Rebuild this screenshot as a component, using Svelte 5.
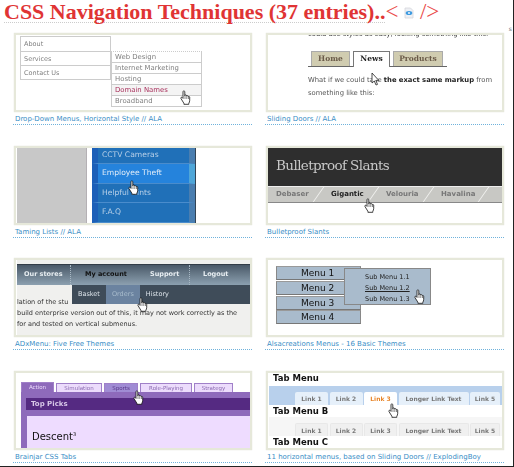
<script>
  const menu1 = ['About', 'Services', 'Contact Us'];
  const sub1 = ['Web Design', 'Internet Marketing', 'Hosting', 'Domain Names', 'Broadband'];
  const doors = [['Home', 39], ['News', 37], ['Products', 50]];
  const blue = ['CCTV Cameras', 'Employee Theft', 'Helpful Hints', 'F.A.Q'];
  const slants = ['Debaser', 'Gigantic', 'Velouria', 'Havalina'];
  const adx = [['Our stores', 47, 14], ['My account', 65, 0], ['Support', 40, 13], ['Logout', 35, 0]];
  const links = [['Link 1', 33], ['Link 2', 33], ['Link 3', 33], ['Longer Link Text', 70], ['Link 5', 30]];
  const purple = [['Action', 33], ['Simulation', 46], ['Sports', 34], ['Role-Playing', 52], ['Strategy', 39]];
</script>

{#snippet hand(x, y)}
  <svg class="hand" style="left:{x}px;top:{y}px" width="11" height="15" viewBox="0 0 11 15">
    <path d="M3.2 1.2c.7-.6 1.6-.2 1.6.7v4l.2-.6c.4-.6 1.3-.5 1.5.2l.1.5c.4-.6 1.3-.5 1.5.2l.1.4c.5-.4 1.4-.2 1.5.6v3.2c0 1.2-.4 2-.9 2.9v1H3.9v-1L1 8.600c-.6-.9.4-1.800 1.200-1.100l.8.9V1.900c0-.3 0-.5.200-.7z" fill="#fff" stroke="#111" stroke-width=".8"/>
    <path d="M5 6v3M6.800 6.300V9M8.500 6.800V9" stroke="#111" stroke-width=".5" fill="none"/>
  </svg>
{/snippet}

<div class="page">
  <header>
    <h1><span class="name">CSS Navigation Techniques (37 entries)..</span><span class="tag">&lt;
      <svg class="doc" width="10" height="12" viewBox="0 0 10 12">
        <path d="M1 1h5.500L9 3.500V11H1z" fill="#eef0f4" stroke="#d4d6dc" stroke-width=".8"/>
        <ellipse cx="5" cy="6" rx="3.300" ry="2" fill="#3f9be0"/>
        <circle cx="5" cy="6" r=".9" fill="#fff"/>
      </svg>
      /&gt;</span></h1>
    <span class="stray">s</span>
  </header>

  <div class="grid">
    <section>
      <div class="card"><div class="thumb t1">
        <ul class="left">{#each menu1 as m}<li>{m}</li>{/each}</ul>
        <ul class="sub">{#each sub1 as s, i}<li class:on={i === 3}>{s}</li>{/each}</ul>
        {@render hand(164, 55)}
      </div></div>
      <a href="#a">Drop-Down Menus, Horizontal Style // ALA</a>
    </section>

    <section>
      <div class="card"><div class="thumb t2">
        <p class="cut">could use styles as easy, looking something like this:</p>
        <div class="tabs">
          {#each doors as d, i}<span class:on={i === 1} style="width:{d[1]}px">{d[0]}</span>{/each}
        </div>
        <p class="para">What if we could take <b>the exact same markup</b> from something like this:</p>
        <svg class="hand" style="left:103px;top:37px" width="9" height="14" viewBox="0 0 9 14">
          <path d="M1 1v10l2.300-2 1.700 4 1.500-.6-1.700-4h3z" fill="#fff" stroke="#222" stroke-width=".8"/>
        </svg>
      </div></div>
      <a href="#a">Sliding Doors // ALA</a>
    </section>

    <section>
      <div class="card"><div class="thumb t3">
        <div class="grey"></div>
        <div class="blue">
          {#each blue as b, i}<div class="row" class:on={i === 1}>{b}</div>{/each}
        </div>
        {@render hand(112, 32)}
      </div></div>
      <a href="#a">Taming Lists // ALA</a>
    </section>

    <section>
      <div class="card"><div class="thumb t4">
        <div class="dark">Bulletproof Slants</div>
        <nav>
          {#each slants as s, i}<span class:on={i === 1}>{s}</span>{/each}
        </nav>
        {@render hand(96, 50)}
      </div></div>
      <a href="#a">Bulletproof Slants</a>
    </section>

    <section>
      <div class="card"><div class="thumb t5">
        <nav>
          {#each adx as a, i}<span class:on={i === 1} class:sep={a[2] > 0} style="width:{a[1]}px;margin-right:{a[2]}px">{a[0]}</span>{/each}
        </nav>
        <div class="copy">
          <p>lation of the stu</p>
          <p>build enterprise version out of this, it may not work correctly as the</p>
          <p>for and tested on vertical submenus.</p>
        </div>
        <div class="bar">
          <span>Basket</span><span class="on">Orders</span><span>History</span>
        </div>
        {@render hand(120, 37)}
      </div></div>
      <a href="#a">ADxMenu: Five Free Themes</a>
    </section>

    <section>
      <div class="card"><div class="thumb t6">
        <div class="main">
          {#each [1, 2, 3, 4] as n}<div>Menu {n}</div>{/each}
        </div>
        <div class="pop">
          <span>Sub Menu 1.1</span>
          <span class="on">Sub Menu 1.2</span>
          <span>Sub Menu 1.3</span>
        </div>
        {@render hand(146, 29)}
      </div></div>
      <a href="#a">Alsacreations Menus - 16 Basic Themes</a>
    </section>

    <section>
      <div class="card"><div class="thumb t7">
        <div class="ptabs">
          {#each purple as p, i}<span class:active={i === 0} class:over={i === 2} style="width:{p[1]}px">{p[0]}</span>{/each}
        </div>
        <div class="panel">
          <div class="picks">Top Picks</div>
          <div class="body">Descent<sup>3</sup></div>
        </div>
        {@render hand(117, 17)}
      </div></div>
      <a href="#a">Brainjar CSS Tabs</a>
    </section>

    <section>
      <div class="card"><div class="thumb t8">
        <h2>Tab Menu</h2>
        <div class="band a">
          {#each links as l, i}<span class:on={i === 2} style="width:{l[1]}px">{l[0]}</span>{/each}
        </div>
        <h2>Tab Menu B</h2>
        <div class="band b">
          {#each links as l}<span style="width:{l[1]}px">{l[0]}</span>{/each}
        </div>
        <h2>Tab Menu C</h2>
        {@render hand(120, 30)}
      </div></div>
      <a href="#a">11 horizontal menus, based on Sliding Doors // ExplodingBoy</a>
    </section>
  </div>
</div>

<style>
  :global(body) {
    background: #fff;
  }

  .page {
    box-sizing: border-box;
    width: 514px;
    height: 467px;
    overflow: hidden;
    border-right: 1px solid #222;
    border-bottom: 1px solid #222;
    font-family: "DejaVu Sans", sans-serif;
  }

  header {
    display: flex;
    height: 33px;
    padding-left: 4px;
    box-sizing: border-box;
  }

  h1 {
    margin: 0;
    height: 23px;
    font: bold 22px/24px "Liberation Serif", serif;
    color: #e03434;
    white-space: nowrap;
  }

  .name {
    display: inline-block;
    border-bottom: 1px dotted #ccc;
    height: 22px;
  }

  .tag {
    font-weight: normal;
    font-size: 23px;
    color: #ea4a4a;
  }

  .doc {
    vertical-align: 0;
  }

  .stray {
    margin-left: auto;
    margin-right: 1px;
    align-self: flex-end;
    font-size: 6px;
    line-height: 8px;
    color: #666;
  }

  .grid {
    display: grid;
    grid-template-columns: 239px 239px;
    column-gap: 13px;
    row-gap: 19.67px;
    margin-left: 13px;
  }

  section {
    height: 93px;
  }

  .card {
    box-sizing: border-box;
    width: 238px;
    height: 79px;
    margin-left: 1px;
    border: 2px solid #e6e8da;
    box-shadow: 0 0 1px #d8dad0;
  }

  .thumb {
    position: relative;
    box-sizing: border-box;
    height: 75px;
    overflow: hidden;
    background: #fff;
    filter: blur(.3px);
  }

  section > a {
    display: block;
    height: 13px;
    padding: 3px 0 0 2px;
    box-sizing: border-box;
    border-bottom: 1px dotted #6fb2dc;
    font-size: 7px;
    line-height: 9px;
    color: #3a8ec6;
    text-decoration: none;
    white-space: nowrap;
    overflow: hidden;
  }

  .hand {
    position: absolute;
  }

  ul {
    list-style: none;
    margin: 0;
    padding: 0;
  }

  /* drop-down */
  .t1 {
    display: flex;
    align-items: flex-start;
    padding: 1px 0 0 4px;
    font-size: 6.5px;
    color: #808080;
  }

  .left {
    width: 91px;
    box-sizing: border-box;
    border-left: 1px solid #ccc;
  }

  .left li {
    box-sizing: border-box;
    height: 14.7px;
    line-height: 14px;
    padding-left: 3px;
    border-top: 1px solid #ccc;
    border-right: 1px solid #ccc;
  }

  .left li:last-child {
    border-bottom: 1px solid #ccc;
  }

  .sub {
    width: 91px;
    margin-top: 14.5px;
    font-size: 6.9px;
  }

  .sub li {
    box-sizing: border-box;
    height: 11px;
    line-height: 10px;
    padding-left: 3px;
    border: 1px solid #ccc;
    border-width: 1px 1px 0 1px;
  }

  .sub li:first-child {
    border-top-style: dotted;
  }

  .sub li:last-child {
    height: 12px;
    border-bottom-width: 1px;
  }

  .sub li.on {
    background: #f4f4f4;
    color: #a8305c;
  }

  /* sliding doors */
  .t2 {
    padding-left: 40px;
    font-size: 6.8px;
    color: #555;
  }

  .cut {
    margin: -5px 0 0;
    height: 8px;
    line-height: 8px;
    white-space: nowrap;
    color: #333;
  }

  .tabs {
    display: flex;
    gap: 3px;
    width: 139px;
    height: 16px;
    margin-top: 13px;
    padding-left: 3px;
    box-sizing: border-box;
    border-bottom: 1px solid #666;
    font: bold 7.5px/14px "DejaVu Serif", serif;
  }

  .tabs span {
    box-sizing: border-box;
    text-align: center;
    background: #d0ccb0;
    border: 1px solid #aaa;
    border-bottom: 0;
    color: #6a5a48;
  }

  .tabs .on {
    height: 16px;
    background: #fff;
    border-color: #777;
    color: #222;
  }

  .para {
    margin: 7px 0 0;
    width: 194px;
    line-height: 12.500px;
  }

  .para b {
    color: #222;
  }

  /* taming lists */
  .t3 {
    display: flex;
  }

  .grey {
    width: 69px;
    margin-left: 1px;
    background: #c8c8c8;
    border-right: 1px solid #b4b0b4;
  }

  .blue {
    width: 103px;
    margin-left: 5px;
    border-right: 1px solid #345;
    font-size: 7.6px;
    color: #b8d0e8;
  }

  .row {
    box-sizing: border-box;
    height: 19.500px;
    line-height: 17px;
    padding-left: 4px;
    background: #2070b8;
    border-left: 6px solid #1c5fb8;
    border-right: 6px solid #4a7eb0;
    border-bottom: 1px solid #4a8ccc;
  }

  .row:first-child {
    height: 16px;
    line-height: 14px;
  }

  .row.on {
    height: 20px;
    background: #2583dc;
    border-right-color: #4fa6d8;
    color: #e0ecf8;
  }

  /* slants */
  .dark {
    height: 38px;
    padding-left: 8px;
    background: #2e2e2e;
    font: 13.500px/35px "DejaVu Serif", serif;
    letter-spacing: -.6px;
    color: #c8c8c8;
  }

  .t4 nav {
    display: flex;
    height: 17px;
    box-sizing: border-box;
    overflow: hidden;
    background: #c8c8c4;
    border-top: 1px solid #eee;
    border-bottom: 1px solid #888;
    font-size: 7px;
    font-weight: bold;
    line-height: 15px;
    color: #777;
  }

  .t4 nav span {
    position: relative;
    width: 55px;
    padding-left: 8px;
    box-sizing: border-box;
  }

  .t4 nav span::after {
    content: "";
    position: absolute;
    right: 4px;
    top: -1px;
    height: 17px;
    border-right: 1px solid #f2f2f0;
    transform: skewX(-35deg);
  }

  .t4 nav .on {
    color: #222;
  }

  /* adxmenu */
  .t5 {
    background: #f0f0ee;
    margin-left: 1px;
  }

  .t5 nav {
    display: flex;
    height: 20px;
    margin-top: 4px;
    padding-left: 7px;
    background: linear-gradient(#4a5968, #8ca0b0);
    border-top: 1px solid #333d48;
    font-size: 6.5px;
    font-weight: bold;
    line-height: 19px;
    color: #e8eef2;
    white-space: nowrap;
  }

  .t5 nav span {
    box-sizing: border-box;
  }

  .t5 nav .sep {
    border-right: 1px dotted #a8b8c4;
  }

  .t5 nav .on {
    color: #111;
  }

  .copy {
    padding-top: 12px;
    font-size: 6.5px;
    line-height: 11px;
    color: #333;
    white-space: nowrap;
  }

  .copy p {
    margin: 0;
  }

  .bar {
    position: absolute;
    left: 55px;
    top: 25px;
    right: 0;
    height: 19px;
    display: flex;
    background: #3f4c59;
    font-size: 6.5px;
    line-height: 18px;
    color: #dde4ea;
  }

  .bar span {
    padding: 0 6px;
  }

  .bar .on {
    background: #6b83a0;
    color: #a8bccc;
  }

  /* alsacreations */
  .t6 {
    padding: 6px 0 0 8px;
  }

  .main {
    width: 85px;
  }

  .main div {
    box-sizing: border-box;
    height: 14px;
    margin-bottom: .700px;
    padding-left: 24px;
    background: #a9bbcc;
    border: 1px solid #888;
    border-color: #999 #888 #777;
    font-size: 9px;
    line-height: 12px;
    color: #111;
  }

  .pop {
    position: absolute;
    left: 76px;
    top: 8px;
    width: 87px;
    height: 37px;
    box-sizing: border-box;
    display: flex;
    flex-direction: column;
    padding: 3px 0 0 20px;
    background: #a9bbcc;
    border: 1px solid #888;
    font-size: 6.500px;
    line-height: 11px;
    color: #222;
  }

  .pop .on {
    text-decoration: underline;
  }

  /* brainjar */
  .t7 {
    padding: 9px 0 0 5px;
  }

  .ptabs {
    display: flex;
    gap: 2px;
    align-items: flex-end;
    height: 10px;
    font-size: 5.500px;
    line-height: 9px;
    text-align: center;
    color: #8a6ab0;
  }

  .ptabs span {
    box-sizing: border-box;
    height: 9px;
    background: #ecdcfc;
    border: 1px solid #a080c8;
    border-bottom: 0;
  }

  .ptabs .active {
    height: 10px;
    background: #8e6abb;
    color: #ecdcfc;
  }

  .ptabs .over {
    background: #a08cd4;
    color: #5a3a8a;
  }

  .panel {
    height: 60px;
    padding-top: 6px;
    box-sizing: border-box;
    background: #8e6abb;
  }

  .picks {
    height: 12px;
    margin-left: 5px;
    padding-left: 5px;
    background: #552a82;
    font-size: 7px;
    font-weight: bold;
    line-height: 12px;
    color: #d8c8e8;
  }

  .body {
    height: 40px;
    margin: 6px 0 0 6px;
    padding: 14px 0 0 5px;
    box-sizing: border-box;
    background: #eedcff;
    font-size: 10px;
    line-height: 14px;
    color: #111;
  }

  sup {
    font-size: 5px;
    line-height: 0;
  }

  /* exploding boy */
  .t8 {
    padding: 0 0 0 1px;
  }

  h2 {
    margin: 0;
    height: 11px;
    padding-left: 4px;
    font-size: 8.500px;
    font-weight: bold;
    line-height: 11px;
    color: #111;
  }

  .band {
    display: flex;
    align-items: flex-end;
    gap: 1.500px;
    height: 19px;
    margin-bottom: 1px;
    padding-left: 26px;
    overflow: hidden;
    font-size: 6px;
    font-weight: bold;
    line-height: 13px;
    text-align: center;
    color: #777;
  }

  .band span {
    flex: none;
    height: 13px;
    border-radius: 2px 2px 0 0;
  }

  .band.a {
    margin-top: 2px;
    background: #b8d0ec;
  }

  .band.a span {
    background: #e6f0fa;
  }

  .band.a .on {
    background: #fff;
    color: #e8862a;
  }

  .band.b {
    background: #f6f6f6;
  }

  .band.b span {
    background: #f0f0f0;
    border: 1px solid #e8e8e8;
    border-bottom: 0;
    box-sizing: border-box;
  }
</style>
